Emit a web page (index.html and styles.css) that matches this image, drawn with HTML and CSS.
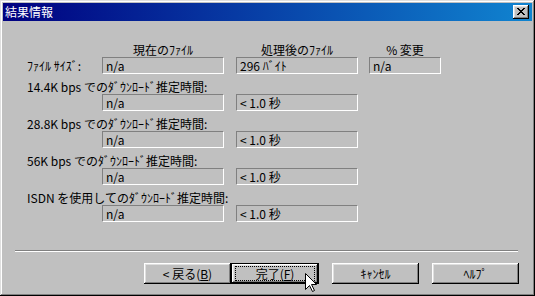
FILE: index.html
```html
<html>
  <head>
    <title>結果情報</title>
    <meta content="text/html;charset=utf-8" http-equiv="Content-Type">
    <link rel="stylesheet" href="styles.css">
  </head>
  <body>
    <div class="window">
      <div class="titlebar">
        <span class="title">結果情報</span>
        <button class="close">
          <svg width="8" height="7" viewBox="0 0 8 7" shape-rendering="crispEdges">
            <rect x="0" y="0" width="2" height="1"/><rect x="6" y="0" width="2" height="1"/>
            <rect x="1" y="1" width="2" height="1"/><rect x="5" y="1" width="2" height="1"/>
            <rect x="2" y="2" width="4" height="1"/>
            <rect x="3" y="3" width="2" height="1"/>
            <rect x="2" y="4" width="4" height="1"/>
            <rect x="1" y="5" width="2" height="1"/><rect x="5" y="5" width="2" height="1"/>
            <rect x="0" y="6" width="2" height="1"/><rect x="6" y="6" width="2" height="1"/>
          </svg>
        </button>
      </div>

      <div class="content">
        <div class="head">
          <div class="col1">現在のﾌｧｲﾙ</div>
          <div class="col2">処理後のﾌｧｲﾙ</div>
          <div class="col3">% 変更</div>
        </div>
        <div class="row">
          <div class="label">ﾌｧｲﾙ ｻｲｽﾞ:</div>
          <div class="field col1">n/a</div>
          <div class="field col2">296 ﾊﾞｲﾄ</div>
          <div class="field col3">n/a</div>
        </div>

        <div class="group">
          <div class="caption">14.4K bps でのﾀﾞｳﾝﾛｰﾄﾞ推定時間:</div>
          <div class="row indent">
            <div class="field col1">n/a</div>
            <div class="field col2">&lt; 1.0 秒</div>
          </div>
        </div>
        <div class="group">
          <div class="caption">28.8K bps でのﾀﾞｳﾝﾛｰﾄﾞ推定時間:</div>
          <div class="row indent">
            <div class="field col1">n/a</div>
            <div class="field col2">&lt; 1.0 秒</div>
          </div>
        </div>
        <div class="group">
          <div class="caption">56K bps でのﾀﾞｳﾝﾛｰﾄﾞ推定時間:</div>
          <div class="row indent">
            <div class="field col1">n/a</div>
            <div class="field col2">&lt; 1.0 秒</div>
          </div>
        </div>
        <div class="group">
          <div class="caption">ISDN を使用してのﾀﾞｳﾝﾛｰﾄﾞ推定時間:</div>
          <div class="row indent">
            <div class="field col1">n/a</div>
            <div class="field col2">&lt; 1.0 秒</div>
          </div>
        </div>
      </div>

      <div class="footer">
        <div class="sep"></div>
        <div class="buttons">
          <button class="btn">&lt; 戻る(<u>B</u>)</button>
          <button class="btn default"><span class="focus">完了(<u>F</u>)</span></button>
          <button class="btn spaced">ｷｬﾝｾﾙ</button>
          <button class="btn spaced">ﾍﾙﾌﾟ</button>
        </div>
      </div>

      <!-- mouse pointer over the Finish button -->
      <svg class="cursor" width="12" height="20" viewBox="0 0 12 20">
        <path d="M0.5 0.5 L0.5 16.5 L4.5 12.5 L7.5 18.5 L9.5 17.5 L6.5 11.5 L11.5 11.5 Z" fill="#fff" stroke="#000" stroke-width="1"/>
      </svg>
    </div>
  </body>
</html>
```

FILE: styles.css
```css
body {
  margin: 0;
  background-color: #c0c0c0;
  font-family: "Noto Sans CJK JP", sans-serif;
  font-size: 12px;
  color: #000;
}
.window {
  position: relative;
  width: 535px;
  height: 296px;
  box-sizing: border-box;
  padding: 3px;
  background-color: #c0c0c0;
  box-shadow: inset -1px -1px #000, inset 1px 1px #dfdfdf, inset -2px -2px #808080, inset 2px 2px #fff;
  display: flex;
  flex-direction: column;
}
.titlebar {
  height: 18px;
  background: linear-gradient(90deg, #000080, #1084d0);
  display: flex;
  align-items: center;
  justify-content: space-between;
  padding: 0 3px 0 2px;
  color: #fff;
}
.title {
  line-height: 18px;
}
.close {
  width: 16px;
  height: 14px;
  padding: 0;
  border: 0;
  background-color: #c0c0c0;
  box-shadow: inset -1px -1px #000, inset 1px 1px #fff, inset -2px -2px #808080, inset 2px 2px #dfdfdf;
  display: flex;
  align-items: center;
  justify-content: center;
}
.close svg {
  margin-bottom: 1px;
}
.content {
  flex: 1;
  padding: 22px 0 0 24px;
}
.head {
  display: flex;
  height: 14px;
  line-height: 14px;
  padding-left: 75px;
}
.head div {
  text-align: center;
  white-space: nowrap;
}
.col1 {
  width: 122px;
}
.col2 {
  width: 122px;
  margin-left: 12px;
}
.col3 {
  width: 72px;
  margin-left: 11px;
}
.row {
  display: flex;
  align-items: center;
}
.label {
  width: 75px;
  white-space: nowrap;
}
.indent {
  padding-left: 75px;
}
.field {
  box-sizing: border-box;
  height: 17px;
  line-height: 15px;
  padding-left: 3px;
  border: 1px solid;
  border-color: #808080 #fff #fff #808080;
  white-space: nowrap;
}
.group {
  margin-top: 6px;
}
.caption {
  height: 13px;
  line-height: 13px;
  margin-bottom: 1px;
  white-space: nowrap;
}
.footer {
  padding-bottom: 9px;
}
.sep {
  border-top: 1px solid #808080;
  border-bottom: 1px solid #fff;
  margin: 0 14px 0 12px;
}
.buttons {
  display: flex;
  justify-content: flex-end;
  margin-top: 11px;
  padding-right: 13px;
}
.btn {
  box-sizing: border-box;
  width: 87px;
  height: 21px;
  padding: 0;
  border: 0;
  background-color: #c0c0c0;
  box-shadow: inset -1px -1px #000, inset 1px 1px #fff, inset -2px -2px #808080, inset 2px 2px #dfdfdf;
  font-family: inherit;
  font-size: 12px;
  line-height: 19px;
  color: #000;
}
.btn.default {
  width: 88px;
  border: 1px solid #000;
  padding: 2px 3px;
  display: flex;
}
.focus {
  flex: 1;
  border: 1px dotted #000;
  line-height: 13px;
}
.spaced {
  margin-left: 13px;
}
.cursor {
  position: absolute;
  left: 305px;
  top: 273px;
}
```
